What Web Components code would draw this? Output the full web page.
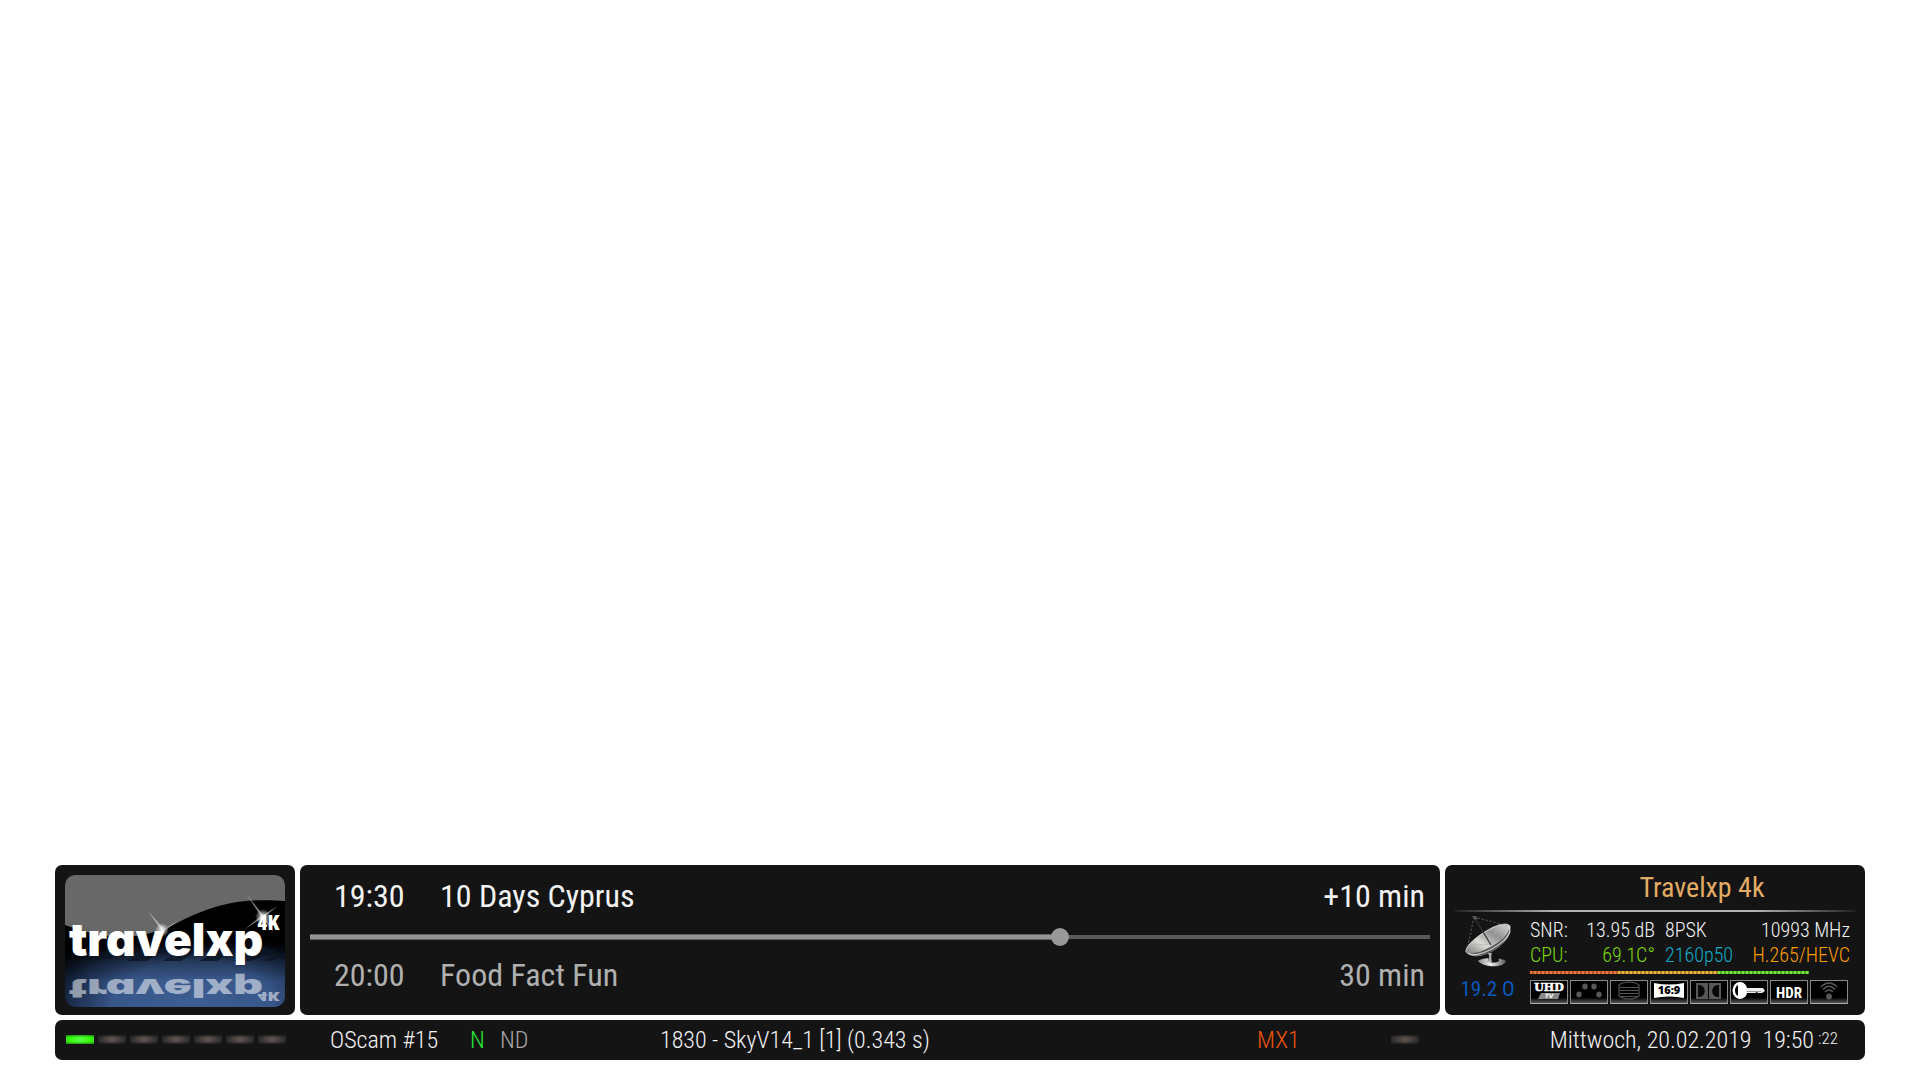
<!DOCTYPE html>
<html lang="de">
<head>
<meta charset="utf-8">
<title>Travelxp 4k</title>
<style>
  body {
    margin: 0;
    background: #fff;
    color: #f2f2f2;
    font-family: "Roboto Condensed", Roboto, sans-serif;
  }
</style>
</head>
<body>
<info-bar></info-bar>

<template id="t-info-bar">
  <style>
    :host { display: flex; flex-direction: column; justify-content: flex-end; gap: 5px; min-height: 100vh; box-sizing: border-box; padding: 0 55px 20px; }
    .top { display: grid; grid-template-columns: 240px 1fr 420px; gap: 5px; }
  </style>
  <div class="top">
    <osd-panel><channel-logo></channel-logo></osd-panel>
    <osd-panel><epg-view></epg-view></osd-panel>
    <osd-panel><signal-info></signal-info></osd-panel>
  </div>
  <osd-panel><status-line></status-line></osd-panel>
</template>

<template id="t-osd-panel">
  <style>:host { display: block; background: #141414; border-radius: 7px; overflow: hidden; }</style>
  <slot></slot>
</template>

<template id="t-channel-logo">
  <style>
    :host { display: block; padding: 10px 10px 8px; }
    svg { display: block; width: 100%; border-radius: 10px; }
    text { font-family: Inter, sans-serif; font-weight: 900; font-feature-settings: "cv11"; }
    .k { font-family: "Roboto Condensed", sans-serif; }
  </style>
  <svg viewBox="0 0 220 132" role="img" aria-label="travelxp 4K">
    <defs>
      <radialGradient id="floor" gradientUnits="userSpaceOnUse" cx="128" cy="132" r="160" gradientTransform="matrix(1 0 0 .58 0 55)">
        <stop offset="0" stop-color="#3f5f93"/><stop offset=".5" stop-color="#38578a"/><stop offset=".75" stop-color="#1d3050"/><stop offset="1" stop-color="#000"/>
      </radialGradient>
      <linearGradient id="fade" x1="0" y1="0" x2="0" y2="1">
        <stop offset="0" stop-color="#000"/><stop offset=".3" stop-color="#000" stop-opacity=".35"/><stop offset=".6" stop-color="#000" stop-opacity="0"/>
      </linearGradient>
      <radialGradient id="glow"><stop offset="0" stop-color="#fff"/><stop offset="1" stop-color="#fff" stop-opacity="0"/></radialGradient>
    </defs>
    <rect width="220" height="132" fill="#000"/>
    <rect y="66" width="220" height="66" fill="url(#floor)"/>
    <rect y="66" width="220" height="66" fill="url(#fade)"/>
    <path d="M0 0H220V26C170 22 142 33 112 48C75 66 45 66 0 50Z" fill="#686868"/>
    <g fill="#0b1524" opacity=".8">
      <path d="M28 84l22-12 10 2-14 10zM62 86l24-14 14 2-18 12zM98 86l22-14 12 3-16 11zM134 86l26-14 12 2-20 12zM168 86l30-14 14 4-26 10zM196 86l24-8v4l-16 4z"/>
    </g>
    <g fill="#fff" opacity=".5">
      <path d="M83 36L99 54L97 56ZM113 46L98 57L97 55Z"/>
      <path d="M182 20L199 41L197 43ZM213 31L199 42L198 40ZM180 54L196 41L197 43ZM209 58L198 43L200 42Z"/>
    </g>
    <circle cx="97" cy="55" r="7" fill="url(#glow)"/>
    <circle cx="198" cy="42" r="8" fill="url(#glow)"/>
    <text x="4" y="81" font-size="46" fill="#fff">travelxp</text>
    <text class="k" x="192" y="55" font-size="21" fill="#fff">4K</text>
    <g transform="translate(0 150) scale(1 -.57)" fill="#fff" opacity=".52">
      <text x="4" y="81" font-size="46">travelxp</text>
      <text class="k" x="192" y="58" font-size="21">4K</text>
    </g>
  </svg>
</template>

<template id="t-epg-view">
  <style>
    :host { display: block; padding: 10px 10px 19px; font-size: 32px; line-height: 42px; }
    .row { display: grid; grid-template-columns: 106px 1fr auto; padding: 0 5px 0 24px; }
    .next { color: #b0b0b0; }
    input {
      appearance: none; display: block; width: 100%; height: 18px; margin: 11px 0 8px; background: none;
    }
    input::-webkit-slider-runnable-track {
      height: 6px;
      background: linear-gradient(#606060 0 1px, #969696 1px 5px, #606060 5px) 0 0 / 67% 100% no-repeat, linear-gradient(#5a5a5a, #5a5a5a) 0 50% / 100% 4px no-repeat;
    }
    input::-webkit-slider-thumb { appearance: none; width: 18px; height: 18px; margin-top: -6px; border-radius: 50%; background: #999; }
  </style>
  <div class="row"><span>19:30</span><span>10 Days Cyprus</span><span>+10 min</span></div>
  <input type="range" min="0" max="1100" value="740" aria-label="10 Days Cyprus">
  <div class="row next"><span>20:00</span><span>Food Fact Fun</span><span>30 min</span></div>
</template>

<template id="t-signal-info">
  <style>
    :host { display: block; padding: 0 10px; }
    .title { padding-left: 84px; margin-right: -10px; font-size: 28px; line-height: 45px; text-align: center; color: #e3ac64; }
    .rule { height: 2px; background: linear-gradient(90deg, #222, #b4b4b4 25%, #b4b4b4 75%, #222); }
    .body { display: grid; grid-template-columns: 65px 1fr; column-gap: 10px; padding-right: 5px; }
    .sat { display: flex; flex-direction: column; align-items: center; gap: 10px; padding-top: 3px; font-size: 21px; line-height: 25px; color: #0759bd; }
    .sat svg { display: block; width: 48px; height: 52px; }
    .stats { padding-top: 6px; font-size: 20px; line-height: 25px; font-weight: 300; }
    .line { display: grid; grid-template-columns: 125px 1fr; column-gap: 10px; }
    .pair { display: flex; justify-content: space-between; }
    .green { color: #7cd60e; } .cyan { color: #0dabc9; } .orange { color: #fa9d00; }
    .meter { width: 279px; height: 3px; margin: 3px 0 6px;
      background: repeating-linear-gradient(90deg, transparent 0 2px, #0004 2px 4px), linear-gradient(90deg, #f07838 0 88px, #ecb23a 88px 188px, #6fe636 188px); }
    .icons { display: flex; gap: 2px; }
  </style>
  <div class="title">Travelxp 4k</div>
  <div class="rule"></div>
  <div class="body">
    <div class="sat">
      <svg viewBox="0 0 48 52" aria-hidden="true">
        <defs>
          <linearGradient id="dish" x1="0" y1="1" x2="1" y2="0"><stop offset="0" stop-color="#777"/><stop offset=".35" stop-color="#dadad6"/><stop offset=".65" stop-color="#909090"/><stop offset="1" stop-color="#ddd"/></linearGradient>
          <linearGradient id="base"><stop offset="0" stop-color="#888"/><stop offset=".45" stop-color="#eee"/><stop offset="1" stop-color="#555"/></linearGradient>
        </defs>
        <path d="M14 46C18 42 36 42 42 46C40 53 20 53 14 46Z" fill="url(#base)"/>
        <path d="M25 37h9l1 9c-3 2-8 2-11 0z" fill="#111"/>
        <path d="M24 38c2 4 1 7-2 9h6c-1-4-1-6 0-9z" fill="#aaa"/>
        <path d="M2 37C-2 29 38 1 46 11C51 27 14 51 2 37Z" fill="#bbb"/>
        <path d="M2 37C-1 29 38 2 46 11C47 23 10 45 2 37Z" fill="url(#dish)" stroke="#ddd" stroke-width=".6"/>
        <path d="M3 37C10 43 43 26 45 14C47 30 14 49 3 37Z" fill="#555"/>
        <path d="M4 38C12 45 43 29 46 16" fill="none" stroke="#ccc" stroke-width="1.2"/>
        <path d="M27 29L7 30M27 29L34 10M27 29L16 21M27 29L44 12" stroke="#aaa" stroke-width=".5"/>
        <path d="M10 2L27 30" stroke="#333" stroke-width="1.2"/>
        <path d="M10 2L4 30M10 2L45 11" stroke="#777" stroke-width=".8" stroke-dasharray="2 2"/>
        <path d="M8 1h4l2 3-3 1z" fill="#555"/>
      </svg>
      <span>19.2 O</span>
    </div>
    <div class="stats">
      <div class="line">
        <div class="pair"><span>SNR:</span><span>13.95 dB</span></div>
        <div class="pair"><span>8PSK</span><span>10993 MHz</span></div>
      </div>
      <div class="line">
        <div class="pair green"><span>CPU:</span><span>69.1C°</span></div>
        <div class="pair"><span class="cyan">2160p50</span><span class="orange">H.265/HEVC</span></div>
      </div>
      <div class="meter"></div>
      <div class="icons">
        <flag-icon><svg viewBox="0 0 38 24"><text x="19" y="11" text-anchor="middle" font-family="DejaVu Serif" font-weight="700" font-size="11" fill="#fff" stroke="#fff" stroke-width=".5">UHD</text><path d="M11 13H30L28 19H8Z" fill="#888"/><text x="19" y="18" text-anchor="middle" font-family="DejaVu Sans" font-style="italic" font-weight="700" font-size="6" fill="#fff">TV</text></svg></flag-icon>
        <flag-icon><svg viewBox="0 0 38 24" fill="#585858"><ellipse cx="15" cy="6.500" rx="2.700" ry="3"/><ellipse cx="24" cy="6.500" rx="2.700" ry="3"/><ellipse cx="9" cy="14.500" rx="2.700" ry="3"/><ellipse cx="29" cy="14.500" rx="2.700" ry="3"/></svg></flag-icon>
        <flag-icon><svg viewBox="0 0 38 24" fill="none" stroke="#555" stroke-width="1.200"><path d="M9 5C14 1 24 1 29 5V16C24 20 14 20 9 16ZM10 7.500H28M10 10.500H28M10 13.500H28M11 16.500H27"/></svg></flag-icon>
        <flag-icon><svg viewBox="0 0 38 24"><path d="M4 3Q19 6 34 3V18Q19 15 4 18Z" fill="#fff"/><text x="19" y="14" text-anchor="middle" font-family="Open Sans" font-weight="800" font-size="11" fill="#000">16:9</text></svg></flag-icon>
        <flag-icon><svg viewBox="0 0 38 24"><path d="M6 3H18V19H6ZM19 3H31V19H19Z" fill="#585858"/><path d="M8 5C17 4 17 18 8 17ZM29 5C20 4 20 18 29 17Z" fill="#080808"/></svg></flag-icon>
        <flag-icon><svg viewBox="0 0 38 24"><ellipse cx="10" cy="10.500" rx="7.500" ry="8.500" fill="#fff"/><path d="M8 5C4 7 4 14 8 16Z" fill="#000"/><path d="M16 8H33L35 11L32 13H28L27 12L25 13H16Z" fill="#eee"/><path d="M17 11.500H31" stroke="#999" stroke-width="1"/></svg></flag-icon>
        <flag-icon><svg viewBox="0 0 38 24"><text x="19" y="18" text-anchor="middle" font-family="Roboto Condensed" font-weight="700" font-size="15" fill="#fff">HDR</text></svg></flag-icon>
        <flag-icon><svg viewBox="0 0 38 24"><circle cx="19" cy="16.500" r="3" fill="#585858"/><path d="M11 7Q19 -1 27 7M13 9.500Q19 3 25 9.500M15 12Q19 8 23 12" fill="none" stroke="#585858" stroke-width="1.500"/></svg></flag-icon>
      </div>
    </div>
  </div>
</template>

<template id="t-flag-icon">
  <style>
    :host { display: block; box-sizing: border-box; width: 38px; height: 24px; border: 1px solid #888; border-bottom-color: #aaa;
      background: linear-gradient(#000 75%, #555); }
    ::slotted(svg) { display: block; width: 38px; height: 24px; margin: -1px; }
  </style>
  <slot></slot>
</template>

<template id="t-led-light">
  <style>
    :host { display: block; width: 28px; height: 9px;
      background: linear-gradient(#141414a0, transparent 30% 70%, #141414a0), radial-gradient(ellipse 60% 120%, #5e5854, #3a3634 60%, #1d1d1d); }
    :host([on]) { background: linear-gradient(#14141470, transparent 25% 75%, #14141470), radial-gradient(ellipse 60% 90%, #5cff48, #36fa10 60%, #26d010); }
  </style>
</template>

<template id="t-status-line">
  <style>
    :host { display: grid; grid-template-columns: 265px 140px 30px 160px 1fr 134px 28px 419px; align-items: center; padding: 1px 27px 0 10px; font-size: 24px; line-height: 39px; font-weight: 300; }
    .leds { display: flex; gap: 4px; padding-left: 1px; }
    .leds, led-light { margin-top: -2px; }
    .leds led-light { margin-top: 0; }
    .n { color: #26e835; } .nd { color: #a8a8ac; } .mx { color: #f0540a; }
    .date { display: flex; justify-content: flex-end; gap: 11px; }
    .time { display: flex; gap: 4px; }
    small { font-size: 17px; line-height: 34px; }
  </style>
  <div class="leds"><led-light on></led-light><led-light></led-light><led-light></led-light><led-light></led-light><led-light></led-light><led-light></led-light><led-light></led-light></div>
  <span>OScam #15</span>
  <span class="n">N</span>
  <span class="nd">ND</span>
  <span>1830 - SkyV14_1 [1] (0.343 s)</span>
  <span class="mx">MX1</span>
  <led-light></led-light>
  <div class="date"><span>Mittwoch, 20.02.2019</span><span class="time"><span>19:50</span><small>:22</small></span></div>
</template>

<script>
  const define = (name) => customElements.define(name, class extends HTMLElement {
    constructor() {
      super();
      this.attachShadow({ mode: "open" }).append(document.getElementById("t-" + name).content.cloneNode(true));
    }
  });
  ["led-light", "flag-icon", "osd-panel", "channel-logo", "epg-view", "signal-info", "status-line", "info-bar"].forEach(define);
</script>
</body>
</html>
